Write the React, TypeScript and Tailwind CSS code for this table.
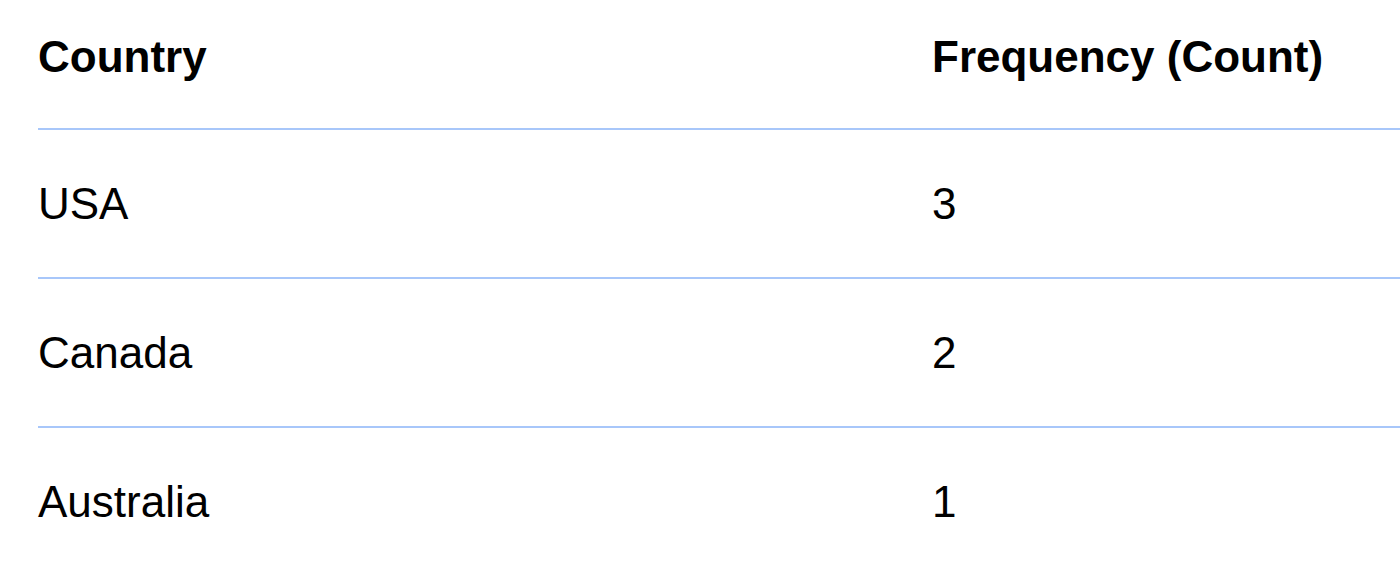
const rows = [
  { country: "USA", count: 3 },
  { country: "Canada", count: 2 },
  { country: "Australia", count: 1 },
];

export default function App() {
  return (
    <div
      className="h-[561px] w-full overflow-hidden bg-white text-black"
      style={{ fontFamily: '"Liberation Sans", Arial, sans-serif' }}
    >
      <div className="pl-[38px]">
        <div className="grid grid-cols-[894px_1fr] pt-[32px] pb-[46px] text-[44px] leading-[50px] font-bold border-b-2 border-[#a8c7fa]">
          <div>Country</div>
          <div>Frequency (Count)</div>
        </div>
        {rows.map((r) => (
          <div
            key={r.country}
            className="grid grid-cols-[894px_1fr] h-[149px] items-center text-[44px] leading-[50px] border-b-2 border-[#a8c7fa]"
          >
            <div>{r.country}</div>
            <div>{r.count}</div>
          </div>
        ))}
      </div>
    </div>
  );
}
